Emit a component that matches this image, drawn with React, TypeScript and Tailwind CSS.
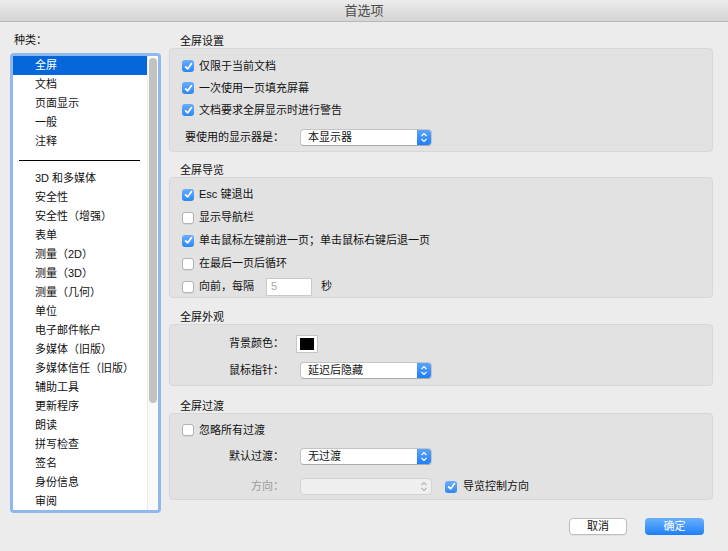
import React from 'react';

const FONT = "font-['Liberation_Sans','Noto_Sans_CJK_SC',sans-serif]";

const categories = [
  '全屏',
  '文档',
  '页面显示',
  '一般',
  '注释',
  '-',
  '3D 和多媒体',
  '安全性',
  '安全性（增强）',
  '表单',
  '测量（2D）',
  '测量（3D）',
  '测量（几何）',
  '单位',
  '电子邮件帐户',
  '多媒体（旧版）',
  '多媒体信任（旧版）',
  '辅助工具',
  '更新程序',
  '朗读',
  '拼写检查',
  '签名',
  '身份信息',
  '审阅',
];

function Check({ on }: { on: boolean }) {
  if (!on) {
    return (
      <span className="h-[12px] w-[12px] shrink-0 rounded-[3px] border border-[#b3b3b3] bg-white shadow-[0_1px_0_rgba(0,0,0,0.05)]" />
    );
  }
  return (
    <span className="flex h-[12px] w-[12px] shrink-0 items-center justify-center rounded-[3px] bg-gradient-to-b from-[#69aefb] to-[#2a86f7]">
      <svg width="9" height="9" viewBox="0 0 9 9">
        <path d="M1.6 4.8 L3.6 6.9 L7.5 1.6" fill="none" stroke="white" strokeWidth="1.7" strokeLinecap="round" strokeLinejoin="round" />
      </svg>
    </span>
  );
}

function CheckRow({ on, label, h = 'h-[22px]' }: { on: boolean; label: string; h?: string }) {
  return (
    <div className={`flex ${h} items-center pl-[12px]`}>
      <Check on={on} />
      <span className="ml-[5px] text-[11px] text-[#111]">{label}</span>
    </div>
  );
}

function Chevrons({ color }: { color: string }) {
  return (
    <svg width="8" height="11" viewBox="0 0 8 11">
      <path d="M1.5 4 L4 1.5 L6.5 4 M1.5 7 L4 9.5 L6.5 7" fill="none" stroke={color} strokeWidth="1.2" />
    </svg>
  );
}

function Select({ value, disabled }: { value?: string; disabled?: boolean }) {
  if (disabled) {
    return (
      <div className="flex h-[17px] w-[132px] items-center rounded-[4px] border border-[#d3d3d3] bg-[#efefef]">
        <span className="flex-1" />
        <span className="flex w-[14px] items-center justify-center">
          <Chevrons color="#b5b5b5" />
        </span>
      </div>
    );
  }
  return (
    <div className="flex h-[17px] w-[132px] items-stretch overflow-hidden rounded-[4px] border border-[#c4c4c4] border-b-[#a9a9a9] bg-white">
      <span className="flex flex-1 items-center pl-[7px] text-[11px] text-[#111]">{value}</span>
      <span className="flex w-[14px] items-center justify-center bg-gradient-to-b from-[#59a3fb] to-[#1c7ef9]">
        <Chevrons color="white" />
      </span>
    </div>
  );
}

function Label({ text, dim }: { text: string; dim?: boolean }) {
  return (
    <span className={`w-[114px] shrink-0 text-right text-[11px] ${dim ? 'text-[#9a9a9a]' : 'text-[#111]'}`}>{text}</span>
  );
}

function Section({ title, h, className = '', children }: { title: string; h: string; className?: string; children: React.ReactNode }) {
  return (
    <div className={className}>
      <div className="h-[14px] pl-[11px] text-[11px] leading-[14px] text-[#111]">{title}</div>
      <div className={`${h} rounded-[4px] border border-[#d7d7d7] bg-[#e2e2e2]`}>{children}</div>
    </div>
  );
}

export default function App() {
  return (
    <div className={`${FONT} flex h-[551px] w-[728px] flex-col overflow-hidden bg-[#ececec]`}>
      <div className="flex h-[22px] shrink-0 items-center justify-center border-b border-[#b9b9b9] bg-gradient-to-b from-[#ececec] to-[#d4d4d4] text-[13px] text-[#4b4b4b]">
        首选项
      </div>

      <div className="flex">
        <div className="w-[161px] shrink-0 pl-[10px] pt-[11px]">
          <div className="h-[14px] pl-[4px] text-[11px] leading-[14px] text-[#111]">种类：</div>
          <div className="mt-[6px] flex h-[460px] rounded-[4px] border-[3px] border-[#8fb8ef] bg-white">
            <div className="flex-1">
              {categories.map((c, i) =>
                c === '-' ? (
                  <div key={i} className="flex h-[18px] items-center pl-[6px] pr-[7px]">
                    <div className="h-px w-full bg-black" />
                  </div>
                ) : (
                  <div
                    key={i}
                    className={`flex h-[19px] items-center pl-[22px] text-[11px] ${i === 0 ? 'bg-[#0667da] text-white' : 'text-[#111]'}`}
                  >
                    {c}
                  </div>
                )
              )}
            </div>
            <div className="w-[11px] shrink-0 border-l border-[#ececec] bg-[#fafafa] px-[1px] pt-[2px]">
              <div className="h-[345px] w-[8px] rounded-[4px] bg-[#c2c2c2]" />
            </div>
          </div>
        </div>

        <div className="ml-[8px] w-[544px] pt-[12px]">
          <Section title="全屏设置" h="h-[104px]">
            <div className="pt-[6px]">
              <CheckRow on label="仅限于当前文档" />
              <CheckRow on label="一次使用一页填充屏幕" />
              <CheckRow on label="文档要求全屏显示时进行警告" />
              <div className="mt-[8px] flex items-center">
                <Label text="要使用的显示器是：" />
                <span className="ml-[16px]">
                  <Select value="本显示器" />
                </span>
              </div>
            </div>
          </Section>

          <Section title="全屏导览" h="h-[121px]" className="mt-[11px]">
            <div className="pt-[5px]">
              <CheckRow on label="Esc 键退出" h="h-[23px]" />
              <CheckRow on={false} label="显示导航栏" h="h-[23px]" />
              <CheckRow on label="单击鼠标左键前进一页；单击鼠标右键后退一页" h="h-[23px]" />
              <CheckRow on={false} label="在最后一页后循环" h="h-[23px]" />
              <div className="flex h-[23px] items-center pl-[12px]">
                <Check on={false} />
                <span className="ml-[5px] text-[11px] text-[#111]">向前，每隔</span>
                <span className="ml-[12px] flex h-[18px] w-[46px] items-center border border-[#c9c9c9] bg-white pl-[4px] text-[11px] text-[#a8a8a8]">
                  5
                </span>
                <span className="ml-[9px] text-[11px] text-[#111]">秒</span>
              </div>
            </div>
          </Section>

          <Section title="全屏外观" h="h-[62px]" className="mt-[12px]">
            <div className="pt-[9px]">
              <div className="flex h-[19px] items-center">
                <Label text="背景颜色：" />
                <span className="ml-[12px] flex h-[18px] w-[22px] items-center justify-center border border-[#c6c6c6] bg-white">
                  <span className="h-[12px] w-[14px] bg-black" />
                </span>
              </div>
              <div className="mt-[9px] flex items-center">
                <Label text="鼠标指针：" />
                <span className="ml-[16px]">
                  <Select value="延迟后隐藏" />
                </span>
              </div>
            </div>
          </Section>

          <Section title="全屏过渡" h="h-[87px]" className="mt-[13px]">
            <div className="pt-[5px]">
              <CheckRow on={false} label="忽略所有过渡" />
              <div className="mt-[7px] flex items-center">
                <Label text="默认过渡：" />
                <span className="ml-[16px]">
                  <Select value="无过渡" />
                </span>
              </div>
              <div className="mt-[13px] flex items-center">
                <Label text="方向：" dim />
                <span className="ml-[16px]">
                  <Select disabled />
                </span>
                <span className="ml-[13px] flex items-center">
                  <Check on />
                  <span className="ml-[6px] text-[11px] text-[#111]">导览控制方向</span>
                </span>
              </div>
            </div>
          </Section>

          <div className="mt-[18px] flex justify-end gap-[18px] pr-[9px]">
            <button className="flex h-[17px] w-[58px] items-center justify-center rounded-[4px] border border-[#bdbdbd] bg-white text-[11px] text-[#111] shadow-[0_1px_0_rgba(0,0,0,0.05)]">
              取消
            </button>
            <button className="flex h-[17px] w-[59px] items-center justify-center rounded-[4px] bg-gradient-to-b from-[#68b0fb] to-[#1a7ff9] text-[11px] text-white">
              确定
            </button>
          </div>
        </div>
      </div>
    </div>
  );
}
